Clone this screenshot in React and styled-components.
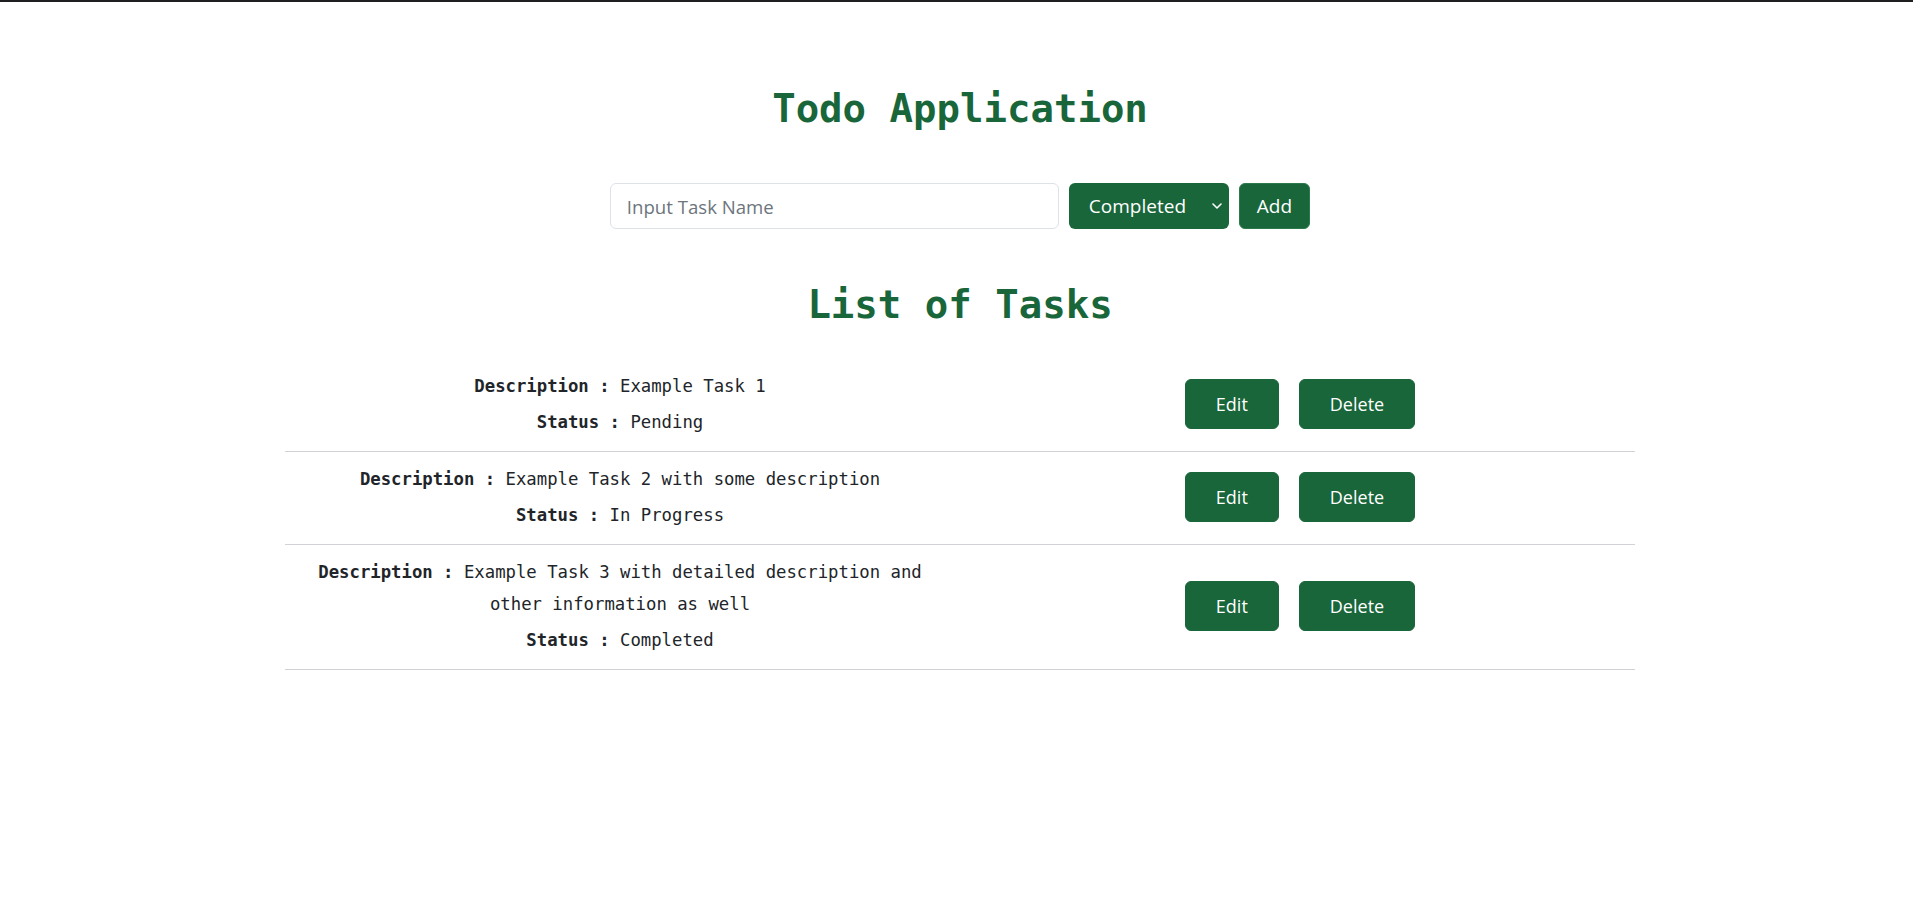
import React from "react";
import styled, { createGlobalStyle } from "styled-components";

const GREEN = "#19663a";
const MONO = `"DejaVu Sans Mono", "Liberation Mono", monospace`;
const SANS = `"Open Sans", "Noto Sans", sans-serif`;

const GlobalStyle = createGlobalStyle`
  html, body { margin: 0; padding: 0; background: #ffffff; }
  body { font-family: ${SANS}; color: #212529; }
  * { box-sizing: border-box; }
`;

const TopBar = styled.div`
  height: 2px;
  background: #1f1f21;
`;

const Shell = styled.div`
  padding-left: 7px;
`;

const Page = styled.main`
  width: 1350px;
  margin: 0 auto;
  padding-top: 83px;
  display: flex;
  flex-direction: column;
  align-items: stretch;
`;

const Heading = styled.h1`
  margin: ${(p) => p.$top || 0}px 0 0;
  font-family: ${MONO};
  font-weight: 700;
  font-size: 39px;
  line-height: 48px;
  color: ${GREEN};
  text-align: center;
`;

const Form = styled.form`
  margin-top: 50px;
  display: flex;
  justify-content: center;
  gap: 10px;
`;

const TaskInput = styled.input`
  width: 449px;
  height: 46px;
  border: 1px solid #dee2e6;
  border-radius: 6px;
  padding: 0 16px;
  font-family: ${SANS};
  font-size: 18.6px;
  color: #212529;
  outline: none;
  &::placeholder { color: #6c757d; }
`;

const SelectWrap = styled.div`
  position: relative;
  width: 160px;
  height: 46px;
`;

const StatusSelect = styled.select`
  appearance: none;
  -webkit-appearance: none;
  width: 100%;
  height: 100%;
  border: none;
  border-radius: 6px;
  background: ${GREEN};
  color: #ffffff;
  font-family: ${SANS};
  font-size: 19px;
  padding: 0 30px 0 20px;
  outline: none;
`;

const Chevron = styled.svg`
  position: absolute;
  right: 7px;
  top: 50%;
  width: 10px;
  height: 6px;
  margin-top: -3px;
  pointer-events: none;
`;

const Button = styled.button`
  height: ${(p) => p.$h || 46}px;
  padding: 0 ${(p) => p.$px || 17}px;
  border: 1px solid ${(p) => (p.$outline ? "#2c7a4c" : GREEN)};
  border-radius: 6px;
  background: ${GREEN};
  color: #ffffff;
  font-family: ${SANS};
  font-size: ${(p) => p.$fs || 19}px;
  cursor: pointer;
`;

const TaskList = styled.section`
  margin-top: 30px;
`;

const Row = styled.div`
  display: grid;
  grid-template-columns: 1fr 1fr;
  column-gap: 10px;
  align-items: center;
  padding: 11px 0 13px;
  border-bottom: 1px solid #d2d2d6;
`;

const Info = styled.div`
  text-align: center;
  padding: 0 6px;
  font-family: ${MONO};
  font-size: 17.3px;
  color: #212529;
`;

const Line = styled.p`
  margin: 0 0 4px;
  line-height: 32px;
  &:last-child { margin-bottom: 0; }
  strong { font-weight: 700; }
`;

const Actions = styled.div`
  display: flex;
  justify-content: center;
  gap: 20px;
`;

const tasks = [
  { id: 1, description: "Example Task 1", status: "Pending" },
  { id: 2, description: "Example Task 2 with some description", status: "In Progress" },
  {
    id: 3,
    description: "Example Task 3 with detailed description and other information as well",
    status: "Completed",
  },
];

export default function App() {
  return (
    <>
      <GlobalStyle />
      <TopBar />
      <Shell>
        <Page>
          <Heading>Todo Application</Heading>
          <Form onSubmit={(e) => e.preventDefault()}>
            <TaskInput placeholder="Input Task Name" />
            <SelectWrap>
              <StatusSelect defaultValue="Completed">
                <option>Pending</option>
                <option>In Progress</option>
                <option>Completed</option>
              </StatusSelect>
              <Chevron viewBox="0 0 10 6" fill="none">
                <path d="M1 1l4 4 4-4" stroke="#ffffff" strokeWidth="1.6" strokeLinecap="round" strokeLinejoin="round" />
              </Chevron>
            </SelectWrap>
            <Button type="submit" $outline>Add</Button>
          </Form>
          <Heading as="h2" $top={52}>List of Tasks</Heading>
          <TaskList>
            {tasks.map((t) => (
              <Row key={t.id}>
                <Info>
                  <Line>
                    <strong>Description :</strong> {t.description}
                  </Line>
                  <Line>
                    <strong>Status :</strong> {t.status}
                  </Line>
                </Info>
                <Actions>
                  <Button type="button" $h={50} $px={30} $fs={18}>Edit</Button>
                  <Button type="button" $h={50} $px={30} $fs={18}>Delete</Button>
                </Actions>
              </Row>
            ))}
          </TaskList>
        </Page>
      </Shell>
    </>
  );
}
